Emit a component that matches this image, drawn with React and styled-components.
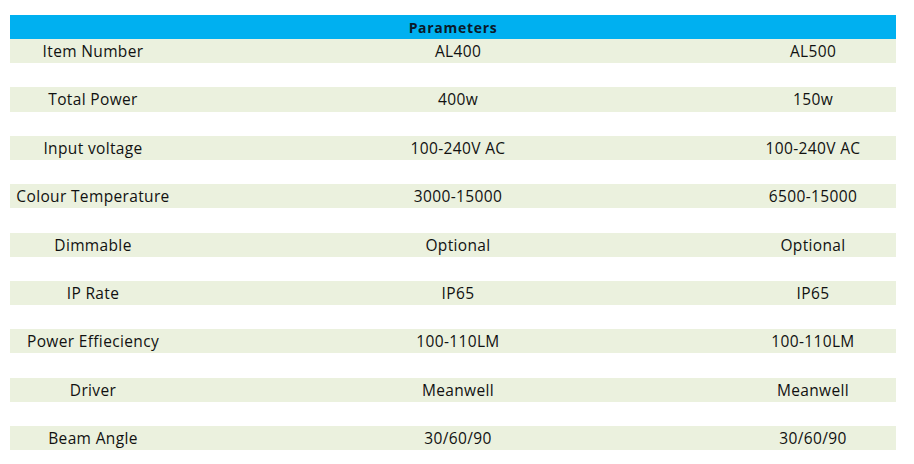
import React from 'react'
import styled, { createGlobalStyle } from 'styled-components'

const Global = createGlobalStyle`
    body {
        margin: 0;
        background: #fff;
        font-family: "Open Sans", Lato, sans-serif;
        color: #000;
    }
`

const Page = styled.div`
    padding: 15px 0 0 10px;
`

const Table = styled.div`
    width: 886px;
`

const Header = styled.div`
    height: 24px;
    background: #00b0f0;
    display: flex;
    align-items: center;
    justify-content: center;
    font-weight: 700;
    font-size: 14px;
    color: #0a1a2a;
    letter-spacing: 0.7px;
`

const Row = styled.div`
    display: grid;
    grid-template-columns: 166px 564px 146px 1fr;
    height: 24.2px;
    margin-bottom: 24.2px;
    background: #ebf1de;
    align-items: center;
    font-size: 15.5px;
    letter-spacing: 0.35px;
    color: #111;
`

const Cell = styled.div`
    text-align: center;
    white-space: nowrap;
`

const rows = [
    ['Item Number', 'AL400', 'AL500'],
    ['Total Power', '400w', '150w'],
    ['Input voltage', '100-240V AC', '100-240V AC'],
    ['Colour Temperature', '3000-15000', '6500-15000'],
    ['Dimmable', 'Optional', 'Optional'],
    ['IP Rate', 'IP65', 'IP65'],
    ['Power Effieciency', '100-110LM', '100-110LM'],
    ['Driver', 'Meanwell', 'Meanwell'],
    ['Beam Angle', '30/60/90', '30/60/90'],
]

export default function App() {
    return (
        <Page>
            <Global />
            <Table>
                <Header>Parameters</Header>
                {rows.map((r) => (
                    <Row key={r[0]}>
                        <Cell>{r[0]}</Cell>
                        <Cell>{r[1]}</Cell>
                        <Cell>{r[2]}</Cell>
                    </Row>
                ))}
            </Table>
        </Page>
    )
}
